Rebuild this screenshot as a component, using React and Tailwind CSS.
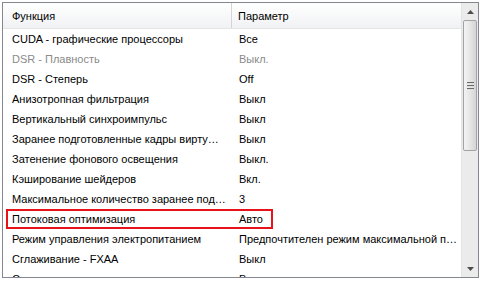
import React from 'react';

const rows = [
  ['CUDA - графические процессоры', 'Все'],
  ['DSR - Плавность', 'Выкл.', true],
  ['DSR - Степерь', 'Off'],
  ['Анизотропная фильтрация', 'Выкл'],
  ['Вертикальный синхроимпульс', 'Выкл'],
  ['Заранее подготовленные кадры вирту…', 'Выкл'],
  ['Затенение фонового освещения', 'Выкл.'],
  ['Кэширование шейдеров', 'Вкл.'],
  ['Максимальное количество заранее под…', '3'],
  ['Потоковая оптимизация', 'Авто', false, true],
  ['Режим управления электропитанием', 'Предпочтителен режим максимальной п…'],
  ['Сглаживание - FXAA', 'Выкл'],
  ['Сглаживание - гамма-коррекция', 'Вкл'],
];

function ScrollBar() {
  return (
    <div className="w-[17px] shrink-0 flex flex-col bg-[#ebebeb] border-l border-[#e3e3e3]">
      <div className="h-[17px] flex items-center justify-center">
        <svg width="7" height="4" viewBox="0 0 7 4">
          <path d="M0 4 L3.5 0 L7 4 Z" fill="#4d4d4d" />
        </svg>
      </div>
      <div className="h-[131px] mx-[1px] rounded-[2px] border border-[#a3a3a3] bg-gradient-to-r from-[#f3f3f3] via-[#e6e6e6] to-[#d4d4d4] flex items-center justify-center">
        <div className="flex flex-col gap-[1px]">
          <div className="w-[7px] h-[2px] bg-[#6a6a6a] border-b border-[#e0e0e0]" />
          <div className="w-[7px] h-[2px] bg-[#6a6a6a] border-b border-[#e0e0e0]" />
          <div className="w-[7px] h-[2px] bg-[#6a6a6a] border-b border-[#e0e0e0]" />
        </div>
      </div>
      <div className="flex-1" />
      <div className="h-[17px] flex items-center justify-center">
        <svg width="7" height="4" viewBox="0 0 7 4">
          <path d="M0 0 L3.5 4 L7 0 Z" fill="#4d4d4d" />
        </svg>
      </div>
    </div>
  );
}

export default function App() {
  return (
    <div className="w-[483px] h-[282px] bg-white pt-[2px] pl-[2px] font-['Liberation_Sans',sans-serif] text-[11px] text-black">
      <div className="w-[477px] h-[276px] border border-[#828790] flex overflow-hidden">
        <div className="flex-1 flex flex-col min-w-0 overflow-hidden">
          <div className="h-[26px] shrink-0 flex bg-gradient-to-b from-white to-[#f1f2f4] border-b border-[#e5e5e5]">
            <div className="w-[229px] shrink-0 pl-[9px] pt-[2px] flex items-center border-r border-[#d5d5d5]">Функция</div>
            <div className="flex-1 pl-[6px] pt-[2px] flex items-center">Параметр</div>
          </div>
          {rows.map(([name, value, disabled, marked]) => (
            <div key={name} className={`relative h-[20px] shrink-0 flex items-center whitespace-nowrap ${disabled ? 'text-[#8a8a8a]' : ''}`}>
              <div className="w-[229px] shrink-0 pl-[9px]">{name}</div>
              <div className="flex-1 min-w-0 pl-[7px]">{value}</div>
              {marked && (
                <div className="absolute left-[3px] top-0 w-[267px] h-[20px] border-2 border-[#e8121a]" />
              )}
            </div>
          ))}
        </div>
        <ScrollBar />
      </div>
    </div>
  );
}
